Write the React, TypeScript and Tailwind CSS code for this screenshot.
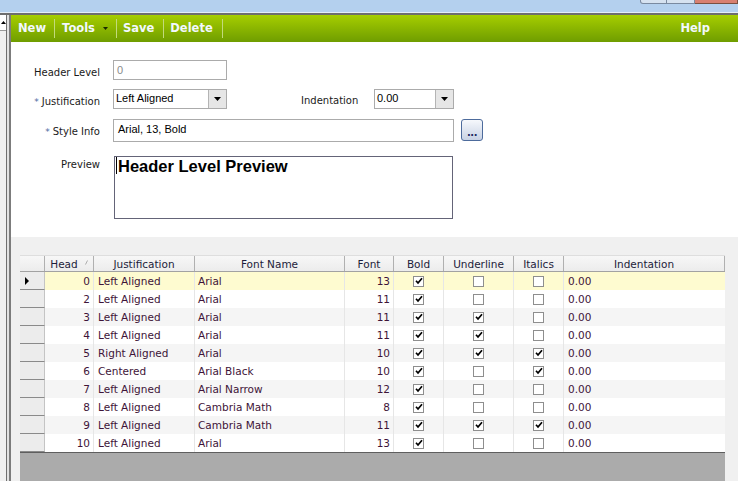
import React from "react";

type Row = {
  head: number;
  just: string;
  font: string;
  size: number;
  bold: boolean;
  underline: boolean;
  italics: boolean;
};

const rows: Row[] = [
  { head: 0, just: "Left Aligned", font: "Arial", size: 13, bold: true, underline: false, italics: false },
  { head: 2, just: "Left Aligned", font: "Arial", size: 11, bold: true, underline: false, italics: false },
  { head: 3, just: "Left Aligned", font: "Arial", size: 11, bold: true, underline: true, italics: false },
  { head: 4, just: "Left Aligned", font: "Arial", size: 11, bold: true, underline: true, italics: false },
  { head: 5, just: "Right Aligned", font: "Arial", size: 10, bold: true, underline: true, italics: true },
  { head: 6, just: "Centered", font: "Arial Black", size: 10, bold: true, underline: false, italics: true },
  { head: 7, just: "Left Aligned", font: "Arial Narrow", size: 12, bold: true, underline: false, italics: false },
  { head: 8, just: "Left Aligned", font: "Cambria Math", size: 8, bold: true, underline: false, italics: false },
  { head: 9, just: "Left Aligned", font: "Cambria Math", size: 11, bold: true, underline: true, italics: true },
  { head: 10, just: "Left Aligned", font: "Arial", size: 13, bold: true, underline: false, italics: false },
];

const CheckBox = ({ checked }: { checked: boolean }) => (
  <span className="w-[11px] h-[11px] border border-[#8e8e8e] bg-white flex items-center justify-center">
    {checked && (
      <svg width="8" height="8" viewBox="0 0 8 8">
        <path d="M1 3.8 L3 6 L7 1.2" stroke="#000" strokeWidth="1.7" fill="none" />
      </svg>
    )}
  </span>
);

const DropButton = () => (
  <div className="w-[18px] h-full border-l border-[#b4b4b4] bg-[#e6e6e6] flex items-center justify-center">
    <svg width="7" height="4" viewBox="0 0 7 4">
      <path d="M0 0 L7 0 L3.5 4 Z" fill="#000" />
    </svg>
  </div>
);

const Label = ({ children, req, className = "" }: { children: React.ReactNode; req?: boolean; className?: string }) => (
  <div className={`w-[89px] text-right text-[10px] leading-[13px] text-[#1a1a1a] ${className}`}>
    {req && <span className="text-[#4a6aa0] text-[9px] mr-[3px]">*</span>}
    {children}
  </div>
);

const Toolbar = () => (
  <div className="h-[27px] bg-linear-to-b from-[#a6ce00] to-[#6f9d00] flex items-center text-[11.5px] font-bold text-[#f2f8ff] pl-[7px] pr-[28px]">
    <span>New</span>
    <span className="w-px h-[19px] bg-[#c2da7c] ml-[8px] mr-[7px]" />
    <span>Tools</span>
    <svg className="ml-[8px]" width="5" height="3" viewBox="0 0 5 3">
      <path d="M0 0 L5 0 L2.5 3 Z" fill="#1a2a00" />
    </svg>
    <span className="w-px h-[19px] bg-[#c2da7c] ml-[8px] mr-[6px]" />
    <span>Save</span>
    <span className="w-px h-[19px] bg-[#c2da7c] ml-[9px] mr-[6px]" />
    <span>Delete</span>
    <span className="w-px h-[19px] bg-[#c2da7c] ml-[9px]" />
    <span className="ml-auto">Help</span>
  </div>
);

const Form = () => (
  <div className="h-[195px] bg-white pt-[18px] flex flex-col font-['DejaVu_Sans',sans-serif]">
    <div className="flex h-[20px]">
      <Label className="pt-[6px]">Header Level</Label>
      <div className="ml-[13px] w-[114px] h-[20px] border border-[#ababab] text-[11px] text-[#8a8a8a] font-['Liberation_Sans',sans-serif] pl-[3px] leading-[18px]">
        0
      </div>
    </div>

    <div className="flex h-[20px] mt-[9px]">
      <Label req className="pt-[6px]">Justification</Label>
      <div className="ml-[13px] w-[114px] h-[20px] border border-[#ababab] flex text-[11px] text-black font-['Liberation_Sans',sans-serif]">
        <span className="flex-1 pl-[2px] leading-[16px]">Left Aligned</span>
        <DropButton />
      </div>
      <div className="ml-[74px] w-[73px] text-[10px] leading-[13px] text-[#1a1a1a] pt-[5px]">Indentation</div>
      <div className="w-[80px] h-[20px] border border-[#ababab] flex text-[11px] text-black font-['Liberation_Sans',sans-serif]">
        <span className="flex-1 pl-[2px] leading-[16px]">0.00</span>
        <DropButton />
      </div>
    </div>

    <div className="flex h-[23px] mt-[10px]">
      <Label req className="pt-[6px]">Style Info</Label>
      <div className="ml-[13px] w-[341px] h-[23px] border border-[#ababab] text-[11px] text-black font-['Liberation_Sans',sans-serif] pl-[4px] leading-[18px]">
        Arial, 13, Bold
      </div>
      <div className="ml-[7px] w-[22px] h-[22px] rounded-[3px] border border-[#4d6b9c] bg-linear-to-b from-[#f6f8fc] to-[#c8d2e4] flex items-end justify-center pb-[3px]">
        <span className="text-[10px] leading-[8px] font-bold text-[#1e2a60] tracking-[-0.5px]">...</span>
      </div>
    </div>

    <div className="flex mt-[14px]">
      <Label className="pt-[2px]">Preview</Label>
      <div className="ml-[14px] w-[339px] h-[63px] border border-[#646478] flex items-start pl-[1px] pt-0">
        <span className="w-px h-[17px] bg-black mr-px" />
        <span className="font-['Liberation_Sans',sans-serif] font-bold text-[16.5px] leading-[18px] text-black">
          Header Level Preview
        </span>
      </div>
    </div>
  </div>
);

const cols = [25, 49, 101, 150, 49, 50, 70, 50, 161];

const Grid = () => {
  const headers = ["", "Head", "Justification", "Font Name", "Font", "Bold", "Underline", "Italics", "Indentation"];
  return (
    <div className="flex-1 bg-[#f0f0f0] pl-[9px] pt-[18px] flex flex-col font-['DejaVu_Sans',sans-serif] text-[10.5px]">
      <div className="w-[705px] flex-1 flex flex-col">
        <div className="flex h-[17px] border-b border-[#a2a2a2] border-t border-t-[#dedede] bg-linear-to-b from-[#f7f7f7] to-[#ececec] text-[#1c1c3a]">
          {headers.map((h, i) => (
            <div
              key={i}
              style={{ width: cols[i] }}
              className="relative h-full border-r border-[#b0b0b0] flex items-center justify-center leading-[14px]"
            >
              {i === 1 ? (
                <>
                  <span className="mr-[10px]">{h}</span>
                  <svg className="absolute right-[5px] top-[4px]" width="3" height="5" viewBox="0 0 3 5">
                    <path d="M0.5 4.5 L2.5 0.5" stroke="#9a9a9a" strokeWidth="0.8" />
                  </svg>
                </>
              ) : (
                h
              )}
            </div>
          ))}
        </div>

        {rows.map((r, idx) => {
          const bg = idx === 0 ? "bg-[#fefbd0]" : idx % 2 === 0 ? "bg-[#f5f5f5]" : "bg-white";
          return (
            <div key={idx} className={`flex h-[18px] text-[#3e1438] leading-[14px] ${bg}`}>
              <div
                style={{ width: cols[0] }}
                className="h-full bg-[#ececec] border-r border-[#c4c4c4] border-b border-b-[#8a8a8a] flex items-center pl-[5px]"
              >
                {idx === 0 && (
                  <svg width="4" height="8" viewBox="0 0 4 8">
                    <path d="M0 0 L4 4 L0 8 Z" fill="#000" />
                  </svg>
                )}
              </div>
              <div style={{ width: cols[1] }} className="h-full border-r border-[#e6e6e6] flex items-center justify-end pr-[3px]">
                {r.head}
              </div>
              <div style={{ width: cols[2] }} className="h-full border-r border-[#e6e6e6] flex items-center pl-[4px]">
                {r.just}
              </div>
              <div style={{ width: cols[3] }} className="h-full border-r border-[#e6e6e6] flex items-center pl-[3px]">
                {r.font}
              </div>
              <div style={{ width: cols[4] }} className="h-full border-r border-[#e6e6e6] flex items-center justify-end pr-[3px]">
                {r.size}
              </div>
              <div style={{ width: cols[5] }} className="h-full border-r border-[#e6e6e6] flex items-center justify-center">
                <CheckBox checked={r.bold} />
              </div>
              <div style={{ width: cols[6] }} className="h-full border-r border-[#e6e6e6] flex items-center justify-center">
                <CheckBox checked={r.underline} />
              </div>
              <div style={{ width: cols[7] }} className="h-full border-r border-[#e6e6e6] flex items-center justify-center">
                <CheckBox checked={r.italics} />
              </div>
              <div style={{ width: cols[8] }} className="h-full flex items-center pl-[4px]">
                0.00
              </div>
            </div>
          );
        })}

        <div className="flex-1 bg-[#ababab] border-t border-[#5e5e5e]" />
      </div>
    </div>
  );
};

export default function App() {
  return (
    <div className="w-[738px] h-[481px] overflow-hidden flex flex-col bg-[#f0f0f0] font-['DejaVu_Sans',sans-serif]">
      <div className="h-[12px] bg-[#b4d0ee] flex justify-end items-start">
        <div className="w-[27px] h-[4px] border border-t-0 border-[#7a8aa0] rounded-bl-[3px] bg-[#d6e2f0]" />
        <div className="w-[28px] h-[4px] border border-t-0 border-l-0 border-[#7a8aa0] bg-[#d6e2f0]" />
        <div className="w-[43px] h-[4px] border border-t-0 border-l-0 border-[#7a5040] bg-[#d88070]" />
      </div>
      <div className="h-px bg-[#e4eef8]" />
      <div className="h-[2px] bg-[#6e6e6e]" />

      <div className="flex flex-1 min-h-0">
        <div className="w-[7px] flex flex-col bg-[#f0f0f0] border-r border-[#6f6f6f]">
          <div className="h-[16px] bg-white border-b border-[#9a9a9a] flex items-center justify-center">
            <svg width="5" height="3" viewBox="0 0 5 3">
              <path d="M0 3 L5 3 L2.5 0 Z" fill="#000" />
            </svg>
          </div>
        </div>
        <div className="w-[2px] bg-[#e2e2e2]" />
        <div className="w-[2px] bg-[#7c7c7c]" />

        <div className="flex-1 flex flex-col min-w-0">
          <Toolbar />
          <Form />
          <Grid />
        </div>
      </div>
    </div>
  );
}
